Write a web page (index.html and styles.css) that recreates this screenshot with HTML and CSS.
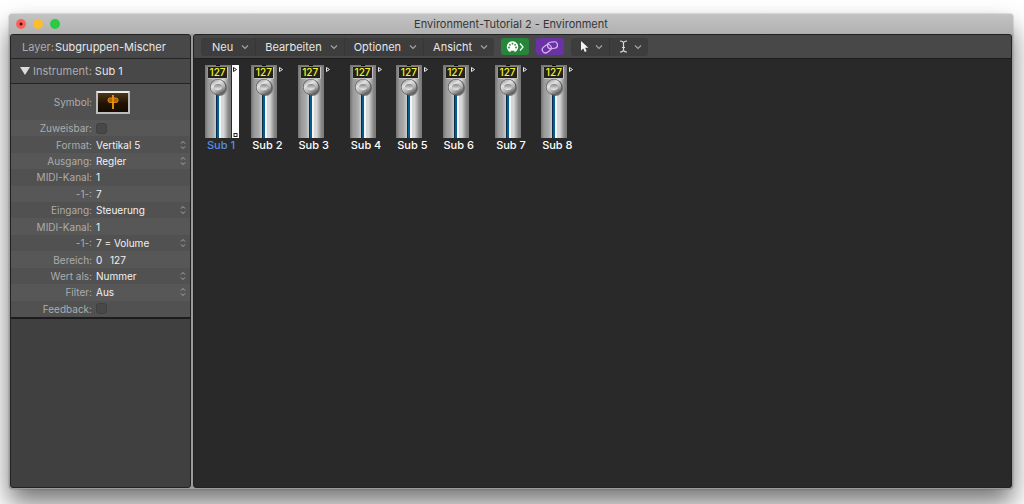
FILE: index.html
```html
<!DOCTYPE html>
<html lang="de">
<head>
<meta charset="utf-8">
<title>Environment-Tutorial 2 - Environment</title>
<link rel="stylesheet" href="styles.css">
</head>
<body>
<svg class="defs" aria-hidden="true">
  <defs>
    <linearGradient id="metal" x1="0" x2="1" y1="0" y2="0">
      <stop offset="0" stop-color="#727272"/><stop offset=".12" stop-color="#999"/><stop offset=".3" stop-color="#aaa"/>
      <stop offset=".48" stop-color="#ddd"/><stop offset=".72" stop-color="#d6d6d6"/><stop offset=".9" stop-color="#888"/><stop offset="1" stop-color="#777"/>
    </linearGradient>
    <linearGradient id="knob" x1=".2" y1="0" x2=".8" y2="1">
      <stop offset="0" stop-color="#9a9a9a"/><stop offset=".3" stop-color="#e2e2e2"/>
      <stop offset=".65" stop-color="#b0b0b0"/><stop offset="1" stop-color="#4c4c4c"/>
    </linearGradient>
    <linearGradient id="dimple" x1="0" y1="0" x2="0" y2="1">
      <stop offset="0" stop-color="#858585"/><stop offset="1" stop-color="#efefef"/>
    </linearGradient>
    <symbol id="fader" viewBox="0 0 34 73">
      <rect width="26" height="73" fill="url(#metal)"/>
      <rect x="1" width="24" height="2" fill="#777"/>
      <rect x="11" width="4" height="2" fill="#06131f"/>
      <rect x="3" y="1" width="21" height="13" fill="#858585"/>
      <rect x="3" y="2" width="19" height="11" fill="#222218"/>
      <path d="M3 13.500H22.500V2" fill="none" stroke="#c4c4c4"/>
      <rect x="11" y="27" width="3" height="46" fill="#062c48"/>
      <rect x="12" y="27" width="2" height="46" fill="#075b8d"/>
      <rect x="14" y="27" width="2" height="46" fill="#f3f6f7"/>
      <ellipse cx="14.500" cy="23" rx="7.500" ry="8" fill="#555" opacity=".75"/>
      <circle cx="13" cy="22" r="8" fill="#5a5a5a"/>
      <circle cx="13" cy="22" r="7.400" fill="url(#knob)"/>
      <ellipse cx="13" cy="22" rx="4" ry="3" fill="url(#dimple)"/>
      <path d="M28.500 2.500V6.500L31.500 4.500Z" fill="none" stroke="#e8e8e8"/>
    </symbol>
    <symbol id="chevron" viewBox="0 0 8 6"><path d="M1 1.500 4 4.500 7 1.500" fill="none" stroke="#a3a3a3" stroke-width="1.200"/></symbol>
  </defs>
</svg>
<div class="window">
  <header class="titlebar">
    <div class="lights">
      <button class="light light-close" aria-label="Schließen"></button>
      <button class="light light-min" aria-label="Minimieren"></button>
      <button class="light light-max" aria-label="Vergrößern"></button>
    </div>
    <h1 class="title">Environment-Tutorial 2 - Environment</h1>
  </header>
  <div class="panes">
    <aside class="sidebar">
      <div class="layer"><span class="dim">Layer:</span><span>Subgruppen-Mischer</span></div>
      <button class="instrument"><svg width="10" height="8" viewBox="0 0 10 8"><path d="M0 0H10L5 8Z" fill="#ddd"/></svg><span class="dim">Instrument:</span><span>Sub 1</span></button>
      <div class="inspector">
        <div class="symbol-row"><span class="label">Symbol:</span>
          <button class="symbol" aria-label="Symbol">
            <svg width="12" height="16" viewBox="0 0 12 16"><path d="M6 1V15" stroke="#f5990c" stroke-width="1.800"/><rect x="1" y="4" width="10" height="4.500" rx="2" fill="#a9640a" stroke="#dd8a10"/><path d="M6 4V9" stroke="#f5990c" stroke-width="1.500"/></svg>
          </button>
        </div>
        <div class="rows">
          <div class="row"><label class="label" for="p1">Zuweisbar:</label><input class="check" type="checkbox" id="p1"></div>
          <div class="row"><label class="label" for="p2">Format:</label><select class="value pick" id="p2"><option>Vertikal 5</option></select></div>
          <div class="row"><label class="label" for="p3">Ausgang:</label><select class="value pick" id="p3"><option>Regler</option></select></div>
          <div class="row"><label class="label" for="p4">MIDI-Kanal:</label><input class="value" id="p4" value="1"></div>
          <div class="row"><label class="label" for="p5">-1-:</label><input class="value" id="p5" value="7"></div>
          <div class="row"><label class="label" for="p6">Eingang:</label><select class="value pick" id="p6"><option>Steuerung</option></select></div>
          <div class="row"><label class="label" for="p7">MIDI-Kanal:</label><input class="value" id="p7" value="1"></div>
          <div class="row"><label class="label" for="p8">-1-:</label><select class="value pick" id="p8"><option>7 = Volume</option></select></div>
          <div class="row"><label class="label" for="p9">Bereich:</label><span class="range"><input class="value range-low" id="p9" value="0"><input class="value" aria-label="Bereich bis" value="127"></span></div>
          <div class="row"><label class="label" for="p10">Wert als:</label><select class="value pick" id="p10"><option>Nummer</option></select></div>
          <div class="row"><label class="label" for="p11">Filter:</label><select class="value pick" id="p11"><option>Aus</option></select></div>
          <div class="row"><label class="label" for="p12">Feedback:</label><input class="check" type="checkbox" id="p12"></div>
        </div>
      </div>
    </aside>
    <main class="main">
      <nav class="toolbar">
        <div class="group menus">
          <button class="menu">Neu<svg width="8" height="6"><use href="#chevron"/></svg></button>
          <button class="menu">Bearbeiten<svg width="8" height="6"><use href="#chevron"/></svg></button>
          <button class="menu">Optionen<svg width="8" height="6"><use href="#chevron"/></svg></button>
          <button class="menu">Ansicht<svg width="8" height="6"><use href="#chevron"/></svg></button>
        </div>
        <button class="toggle midi" aria-label="MIDI-Ausgang">
          <svg width="20" height="14" viewBox="0 0 20 14"><path d="M5.500 12.200A5.700 5.700 0 1 1 9.500 12.200V10.800H5.500Z" fill="#fff"/><g fill="#28863a"><circle cx="4" cy="7.500" r=".9"/><circle cx="4.900" cy="4.800" r=".9"/><circle cx="7.500" cy="3.700" r=".9"/><circle cx="10.100" cy="4.800" r=".9"/><circle cx="11" cy="7.500" r=".9"/></g><path d="M15 3.500 18 7 15 10.500" fill="none" stroke="#fff" stroke-width="1.300"/></svg>
        </button>
        <button class="toggle link" aria-label="Verknüpfen">
          <svg width="18" height="14" viewBox="0 0 18 14" fill="none" stroke="#d5b6ef" stroke-width="1.200"><rect x="1" y="5.500" width="9.500" height="6.500" rx="3.250" transform="rotate(-35 5.750 8.750)"/><rect x="6.500" y="2" width="10" height="6.500" rx="3.250" transform="rotate(-8 11.500 5.250)"/></svg>
        </button>
        <div class="group tools">
          <button class="menu tool" aria-label="Zeiger"><svg width="9" height="13" viewBox="0 0 9 13"><path d="M1 1V10.500L3.300 8.400 4.800 12 6.600 11.200 5.100 7.700H8.300Z" fill="#f4f4f4"/></svg><svg width="8" height="6"><use href="#chevron"/></svg></button>
          <button class="menu tool" aria-label="Text"><svg width="9" height="13" viewBox="0 0 9 13"><path d="M1 1Q4.500 1 4.500 3.500Q4.500 1 8 1M4.500 3V10M1 12Q4.500 12 4.500 9.500Q4.500 12 8 12M3 7.500H6" fill="none" stroke="#d8d8d8" stroke-width="1.200"/></svg><svg width="8" height="6"><use href="#chevron"/></svg></button>
        </div>
      </nav>
      <section class="canvas">
        <div class="bank">
          <div class="strip selected"><div class="body"><svg width="34" height="73"><use href="#fader"/></svg><span class="num">127</span><svg class="cable" width="7" height="73" viewBox="0 0 7 73"><rect width="7" height="73" fill="#fff"/><path d="M1.500 2.500V6.500L4.500 4.500Z" fill="none" stroke="#222"/><rect x="2" y="68.500" width="3" height="3" fill="none" stroke="#222"/></svg></div><span class="name">Sub 1</span></div>
          <div class="strip"><div class="body"><svg width="34" height="73"><use href="#fader"/></svg><span class="num">127</span></div><span class="name">Sub 2</span></div>
          <div class="strip"><div class="body"><svg width="34" height="73"><use href="#fader"/></svg><span class="num">127</span></div><span class="name">Sub 3</span></div>
        </div>
        <div class="bank">
          <div class="strip"><div class="body"><svg width="34" height="73"><use href="#fader"/></svg><span class="num">127</span></div><span class="name">Sub 4</span></div>
          <div class="strip"><div class="body"><svg width="34" height="73"><use href="#fader"/></svg><span class="num">127</span></div><span class="name">Sub 5</span></div>
          <div class="strip"><div class="body"><svg width="34" height="73"><use href="#fader"/></svg><span class="num">127</span></div><span class="name">Sub 6</span></div>
        </div>
        <div class="bank">
          <div class="strip"><div class="body"><svg width="34" height="73"><use href="#fader"/></svg><span class="num">127</span></div><span class="name">Sub 7</span></div>
          <div class="strip"><div class="body"><svg width="34" height="73"><use href="#fader"/></svg><span class="num">127</span></div><span class="name">Sub 8</span></div>
        </div>
      </section>
    </main>
  </div>
</div>
</body>
</html>
```
FILE: styles.css
```css
* { box-sizing: border-box; }
body {
  margin: 0;
  height: 100vh;
  padding: 14px 11px 15px 9px;
  background: #fff;
  overflow: hidden;
  font: 11px/16px Inter, "Liberation Sans", sans-serif;
  color: #e6e6e6;
}
button, input, select {
  font: inherit;
  color: inherit;
  background: none;
  border: 0;
  padding: 0;
  margin: 0;
  border-radius: 0;
  appearance: none;
}
.defs { position: absolute; width: 0; height: 0; }
.window {
  height: 100%;
  display: flex;
  flex-direction: column;
  background: #9c9c9c;
  border-radius: 4px;
  padding: 0 1px 1px;
  box-shadow: 0 14px 26px rgba(0, 0, 0, .55), 0 0 2px rgba(0, 0, 0, .35);
}
.titlebar {
  display: grid;
  grid-template-columns: 1fr auto 1fr;
  align-items: center;
  height: 20px;
  margin: 0 -1px;
  padding: 0 7px;
  background: linear-gradient(#c3c3c3, #b1b1b1);
  border-radius: 4px 4px 0 0;
}
.lights { display: flex; gap: 7px; }
.light { width: 10px; height: 10px; border-radius: 50%; }
.light-close { background: radial-gradient(circle, #5c0a06 0 1px, #f9625a 2px); }
.light-min { background: #fcbd2e; }
.light-max { background: #2aca42; }
.title { margin: 0; font-size: 11px; font-weight: 400; color: #363636; }
.panes { flex: 1; min-height: 0; display: flex; gap: 2px; }
.sidebar, .main { border: 1px solid #222; border-radius: 3px; overflow: hidden; }
.sidebar { width: 181px; flex: none; background: #404040; }
.layer, .instrument {
  display: flex;
  align-items: center;
  gap: 3px;
  width: 100%;
  height: 25px;
  padding-left: 11px;
  background: #484848;
  border-bottom: 1px solid #252525;
}
.layer { height: 24px; gap: 1px; }
.instrument { padding-left: 9px; }
.dim { color: #acacac; }
.inspector { background: #515151; border-bottom: 2px solid #1c1c1c; font-size: 10px; }
.symbol-row, .row { display: grid; grid-template-columns: 81px 1fr; align-items: center; column-gap: 4px; }
.symbol-row { height: 36px; }
.label { text-align: right; color: #acacac; }
.symbol {
  display: grid;
  place-items: center;
  width: 34px;
  height: 23px;
  border: 2px solid #bdbdbd;
  border-top-color: #eee;
  border-radius: 1px;
  background: linear-gradient(#4d3819, #241504 50%, #130a02);
}
.rows { display: grid; grid-auto-rows: 1fr; height: 197px; }
.row { padding-right: 4px; }
.row:nth-child(odd) { background: #575757; }
.value { width: 100%; min-width: 0; height: 16px; color: #f2f2f2; }
.pick {
  background-image: url("data:image/svg+xml,%3Csvg xmlns='http://www.w3.org/2000/svg' width='6' height='10' fill='none' stroke='%23a8a8a8'%3E%3Cpath d='M1 3.500 3 1.500 5 3.500M1 6.500 3 8.500 5 6.500'/%3E%3C/svg%3E");
  background-repeat: no-repeat;
  background-position: right center;
}
.range { display: flex; }
.range-low { flex: none; width: 14px; }
.check { width: 11px; height: 11px; border: 1px solid #404040; border-radius: 3px; background: #484848; }
.main { flex: 1; min-width: 0; background: #292929; display: flex; flex-direction: column; }
.toolbar {
  display: flex;
  align-items: center;
  gap: 7px;
  height: 24px;
  padding-left: 7px;
  background: #484848;
  border-bottom: 1px solid #1e1e1e;
}
.group { display: flex; height: 18px; background: #3d3d3d; border-radius: 3px; }
.menus { padding-left: 2px; }
.menu {
  display: flex;
  align-items: center;
  gap: 8px;
  padding: 0 6px 0 9px;
  border-right: 1px solid #363636;
}
.menu:last-child { border-right: 0; }
.tool { gap: 6px; }
.toggle { display: grid; place-items: center; width: 28px; height: 17px; border-radius: 3px; }
.midi { background: #28863a; }
.link { background: #6a32a4; }
.canvas { flex: 1; display: flex; align-items: flex-start; gap: 6px; padding: 6px 11px; }
.bank { display: grid; grid-template-columns: repeat(3, 1fr); width: 139px; }
.body { position: relative; height: 73px; }
.body svg { display: block; }
.num {
  position: absolute;
  left: 3px;
  top: 2px;
  width: 19px;
  text-align: center;
  font-size: 10px;
  font-weight: 500;
  line-height: 11px;
  color: #f5f52a;
}
.body .cable { position: absolute; left: 27px; top: 0; }
.name { display: block; width: 32px; text-align: center; white-space: nowrap; font-weight: 500; line-height: 15px; color: #fff; }
.selected .name { color: #5590e0; }
```
